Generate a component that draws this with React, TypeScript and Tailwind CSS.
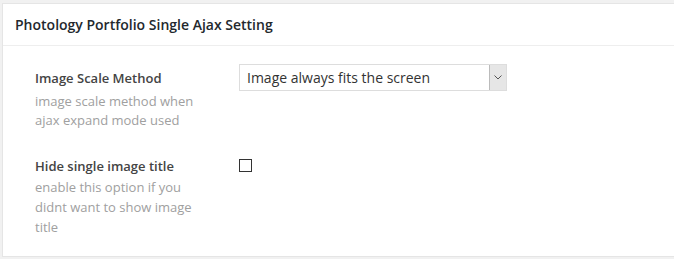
export default function App() {
  return (
    <div className="h-[259px] w-[674px] overflow-hidden bg-[#f1f1f1] pl-[2px] pt-[3px] font-['Open_Sans',sans-serif]">
      <div className="w-[700px] border border-[#e5e5e5] bg-white">
        <div className="flex h-[42px] items-center border-b border-[#eeeeee] px-[12px]">
          <h2 className="text-[14px] font-semibold text-[#23282d]">Photology Portfolio Single Ajax Setting</h2>
        </div>
        <div className="pl-[32px] pt-[18px] pb-[19px]">
          <div className="flex">
            <div className="w-[204px] pt-[5px]">
              <div className="text-[13px] font-semibold leading-[19px] text-[#444]">Image Scale Method</div>
              <div className="mt-[4px] w-[170px] text-[13px] leading-[19px] text-[#a0a0a0]">image scale method when ajax expand mode used</div>
            </div>
            <div className="flex h-[27px] w-[268px] items-stretch border border-[#dddddd] bg-white">
              <div className="flex flex-1 items-center pl-[7px] text-[14px] text-[#333]">Image always fits the screen</div>
              <div className="flex w-[17px] items-center justify-center border-l border-[#bbbbbb] bg-[#e6e6e6]">
                <svg width="8" height="5" viewBox="0 0 8 5"><path d="M0.5 0.5 L4 4 L7.5 0.5" fill="none" stroke="#555" strokeWidth="1" /></svg>
              </div>
            </div>
          </div>
          <div className="mt-[27px] flex">
            <div className="w-[204px]">
              <div className="text-[13px] font-semibold leading-[19px] text-[#444]">Hide single image title</div>
              <div className="mt-[1px] w-[170px] text-[13px] leading-[20px] text-[#a0a0a0]">enable this option if you didnt want to show image title</div>
            </div>
            <div className="pt-[2px]">
              <div className="h-[13px] w-[13px] border border-[#333] bg-white" />
            </div>
          </div>
        </div>
      </div>
    </div>
  )
}
